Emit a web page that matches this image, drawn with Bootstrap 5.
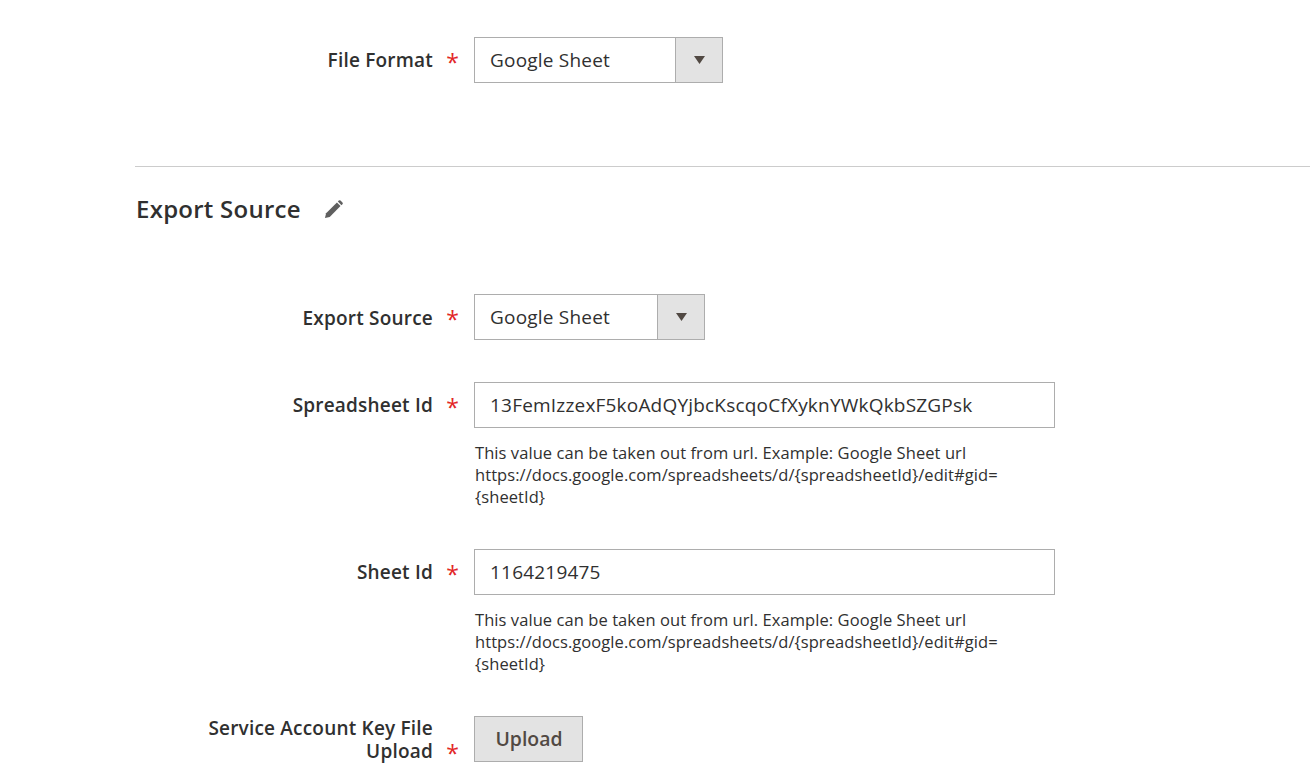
<!DOCTYPE html>
<html lang="en">
<head>
<meta charset="utf-8">
<title>Export</title>
<link href="https://cdn.jsdelivr.net/npm/bootstrap@5.3.0/dist/css/bootstrap.min.css" rel="stylesheet">
<style>
html,body{height:770px;overflow:hidden;background:#fff}
body{font-family:"Open Sans",sans-serif;color:#303030;font-size:18px}
.pg{padding:37px 0 0 135px}
.frow{display:flex;align-items:flex-start}
.flabel{width:298px;flex:none;text-align:right;font-weight:600;font-size:19px;letter-spacing:.2px;line-height:23px;padding:12px 0 0 60px;color:#303030;margin:0}
.lbl-es{padding-top:13px}
.fstar{width:41px;flex:none;text-align:center;color:#e22626;font-size:23px;line-height:23px;padding:14px 2px 0 0;font-weight:400}
.fstar-low{padding-top:26px}
.selwrap{height:46px;flex-wrap:nowrap}
.selwrap .form-select,.ctrl-in{height:46px;border:1px solid #adadad;border-radius:0;font-size:19px;letter-spacing:.2px;color:#303030;padding:0 15px;background-image:none;font-family:inherit;box-shadow:none}
.selwrap .form-select{border-right:0;flex:none}
.w-a{width:249px}.w-a .form-select{width:202px}
.w-b{width:231px}.w-b .form-select{width:184px}
.arrowcell{position:relative;z-index:3;width:48px;flex:none;background:#e3e3e3;border:1px solid #adadad;border-radius:0;padding:0 0 0 1px;justify-content:center}
.ctrl-in{width:581px}
.hint{width:540px;font-size:16.5px;letter-spacing:.07px;line-height:22px;color:#303030;margin:14px 0 0 1px}
.sep{border-top:1px solid #ccc;margin:83px 0 0}
.sect{display:flex;align-items:center;gap:23px;height:85px;margin:0 0 42px 1px;padding-bottom:2px;font-size:24px;line-height:30px;font-weight:600;color:#303030}
.sect h2{font:inherit;margin:0;letter-spacing:.26px}
.sect svg{margin-top:2px}
.gap-a{margin-top:42px}
.gap-b{margin-top:41px}
.gap-c{margin-top:41px}
.upbtn{height:46px;width:109px;background:#e3e3e3;border:1px solid #adadad;border-radius:0;font-size:19.4px;font-weight:600;color:#514943;padding:0 0 0 1px;font-family:inherit}
.upbtn:hover{background:#e3e3e3;color:#514943;border-color:#adadad}
.up-label{padding-top:1px}
</style>
</head>
<body>
<main class="pg">
  <div class="frow">
    <label class="flabel" for="ff">File Format</label>
    <span class="fstar">*</span>
    <div class="input-group selwrap w-a">
      <select class="form-select" id="ff"><option>Google Sheet</option></select>
      <span class="input-group-text arrowcell"><svg width="11" height="8" viewBox="0 0 11 8"><path d="M0 0h11L5.5 8z" fill="#514943"/></svg></span>
    </div>
  </div>
  <div class="sep"></div>
  <div class="sect">
    <h2>Export Source</h2>
    <svg width="19" height="19" viewBox="0 0 20 20" aria-hidden="true"><path d="M1 19l1.2-5L13.6 2.6l3.8 3.8L6 17.8z" fill="#5f5f5f"/><path d="M14.6 1.6l1-1a1.3 1.3 0 0 1 1.8 0l2 2a1.3 1.3 0 0 1 0 1.8l-1 1z" fill="#5f5f5f"/></svg>
  </div>
  <div class="frow">
    <label class="flabel lbl-es" for="es">Export Source</label>
    <span class="fstar">*</span>
    <div class="input-group selwrap w-b">
      <select class="form-select" id="es"><option>Google Sheet</option></select>
      <span class="input-group-text arrowcell"><svg width="11" height="8" viewBox="0 0 11 8"><path d="M0 0h11L5.5 8z" fill="#514943"/></svg></span>
    </div>
  </div>
  <div class="frow gap-a">
    <label class="flabel" for="sp">Spreadsheet Id</label>
    <span class="fstar">*</span>
    <div>
      <input class="form-control ctrl-in" id="sp" value="13FemIzzexF5koAdQYjbcKscqoCfXyknYWkQkbSZGPsk">
      <p class="hint">This value can be taken out from url. Example: Google Sheet url https://docs.google.com/spreadsheets/d/{spreadsheetId}/edit#gid={sheetId}</p>
    </div>
  </div>
  <div class="frow gap-b">
    <label class="flabel" for="si">Sheet Id</label>
    <span class="fstar">*</span>
    <div>
      <input class="form-control ctrl-in" id="si" value="1164219475">
      <p class="hint">This value can be taken out from url. Example: Google Sheet url https://docs.google.com/spreadsheets/d/{spreadsheetId}/edit#gid={sheetId}</p>
    </div>
  </div>
  <div class="frow gap-c">
    <label class="flabel up-label">Service Account Key File Upload</label>
    <span class="fstar fstar-low">*</span>
    <button type="button" class="btn upbtn">Upload</button>
  </div>
</main>
<script src="https://cdn.jsdelivr.net/npm/bootstrap@5.3.0/dist/js/bootstrap.bundle.min.js"></script>
</body>
</html>
